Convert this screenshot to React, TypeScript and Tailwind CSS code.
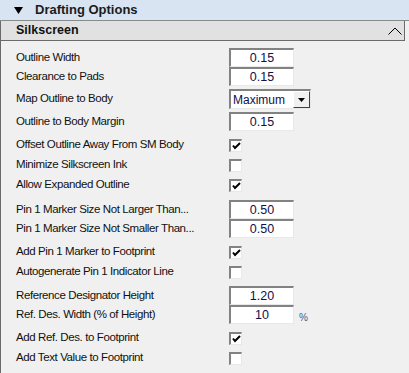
import React from "react";

type Row =
  | { kind: "input"; label: string; value: string; suffix?: string }
  | { kind: "select"; label: string; value: string }
  | { kind: "check"; label: string; checked: boolean };

const groups: { mt: string; rows: Row[] }[] = [
  {
    mt: "mt-0",
    rows: [
      { kind: "input", label: "Outline Width", value: "0.15" },
      { kind: "input", label: "Clearance to Pads", value: "0.15" },
    ],
  },
  { mt: "mt-[3px]", rows: [{ kind: "select", label: "Map Outline to Body", value: "Maximum" }] },
  { mt: "mt-[3px]", rows: [{ kind: "input", label: "Outline to Body Margin", value: "0.15" }] },
  {
    mt: "mt-[4px]",
    rows: [
      { kind: "check", label: "Offset Outline Away From SM Body", checked: true },
      { kind: "check", label: "Minimize Silkscreen Ink", checked: false },
      { kind: "check", label: "Allow Expanded Outline", checked: true },
    ],
  },
  {
    mt: "mt-[5px]",
    rows: [
      { kind: "input", label: "Pin 1 Marker Size Not Larger Than...", value: "0.50" },
      { kind: "input", label: "Pin 1 Marker Size Not Smaller Than...", value: "0.50" },
    ],
  },
  {
    mt: "mt-[4px]",
    rows: [
      { kind: "check", label: "Add Pin 1 Marker to Footprint", checked: true },
      { kind: "check", label: "Autogenerate Pin 1 Indicator Line", checked: false },
    ],
  },
  {
    mt: "mt-[4px]",
    rows: [
      { kind: "input", label: "Reference Designator Height", value: "1.20" },
      { kind: "input", label: "Ref. Des. Width (% of Height)", value: "10", suffix: "%" },
    ],
  },
  {
    mt: "mt-[4px]",
    rows: [
      { kind: "check", label: "Add Ref. Des. to Footprint", checked: true },
      { kind: "check", label: "Add Text Value to Footprint", checked: false },
    ],
  },
];

const sunken =
  "border-t-2 border-l-2 border-b border-r border-t-[#828282] border-l-[#828282] border-b-[#e8e8e8] border-r-[#e8e8e8] bg-white";

const TextBox = ({ value }: { value: string }) => (
  <div className={`w-[65px] h-[19px] flex items-center justify-center text-[12.5px] text-[#10104a] ${sunken}`}>
    {value}
  </div>
);

const Select = ({ value }: { value: string }) => (
  <div className={`w-[82px] h-[20px] flex items-center justify-between pl-[2px] text-[12px] text-[#10104a] ${sunken}`}>
    <span>{value}</span>
    <div className="w-[17px] h-[17px] flex items-center justify-center bg-[#f0f0f0] border border-t-white border-l-white border-b-[#404040] border-r-[#404040]">
      <svg width="7" height="4" viewBox="0 0 7 4">
        <path d="M0 0h7L3.5 4z" fill="#000" />
      </svg>
    </div>
  </div>
);

const CheckBox = ({ checked }: { checked: boolean }) => (
  <div className={`w-[13px] h-[13px] flex items-center justify-center ${sunken}`}>
    {checked && (
      <svg width="9" height="8" viewBox="0 0 9 8">
        <path d="M1 3.5l2 2.5L8 1" stroke="#000" strokeWidth="2" fill="none" />
      </svg>
    )}
  </div>
);

export default function App() {
  return (
    <div className="w-[409px] h-[373px] bg-[#f0f0f0] overflow-hidden text-[11.5px] tracking-[-0.4px] text-[#111]" style={{ fontFamily: '"Liberation Sans", Arial, sans-serif' }}>
      <div className="h-[21px] bg-[#d8e4f1] flex items-center border-b border-[#8a8a8a] tracking-normal">
        <svg width="9" height="7" viewBox="0 0 9 7" className="ml-[14px]">
          <path d="M0 0h9L4.5 7z" fill="#000" />
        </svg>
        <span className="ml-[12px] text-[13px] font-bold text-[#1b1b1b]">Drafting Options</span>
      </div>
      <div className="w-[405px] h-[20px] bg-[#e1e1e1] border-l border-r border-b border-[#6a6a6a] flex items-center justify-between tracking-normal">
        <span className="ml-[15px] text-[12.5px] font-bold">Silkscreen</span>
        <svg width="14" height="8" viewBox="0 0 14 8" className="mr-[2px] mt-[1px]">
          <path d="M0.5 7.5L7 1l6.5 6.5" stroke="#000" strokeWidth="1" fill="none" />
        </svg>
      </div>
      <div className="border-l border-[#6a6a6a] h-full pt-[7px]">
        {groups.map((g, gi) => (
          <div key={gi} className={g.mt}>
            {g.rows.map((r) => (
              <div key={r.label} className={`flex items-center ${r.kind === "check" || r.kind === "select" ? "h-[20px]" : "h-[19px]"}`}>
                <div className="w-[228px] pl-[15px] whitespace-nowrap">{r.label}</div>
                <div className="tracking-normal flex items-center">
                  {r.kind === "input" && <TextBox value={r.value} />}
                  {r.kind === "select" && <Select value={r.value} />}
                  {r.kind === "check" && <CheckBox checked={r.checked} />}
                  {r.kind === "input" && r.suffix && (
                    <span className="ml-[5px] mt-[6px] text-[10px] text-[#3c5a8a]">{r.suffix}</span>
                  )}
                </div>
              </div>
            ))}
          </div>
        ))}
      </div>
    </div>
  );
}
